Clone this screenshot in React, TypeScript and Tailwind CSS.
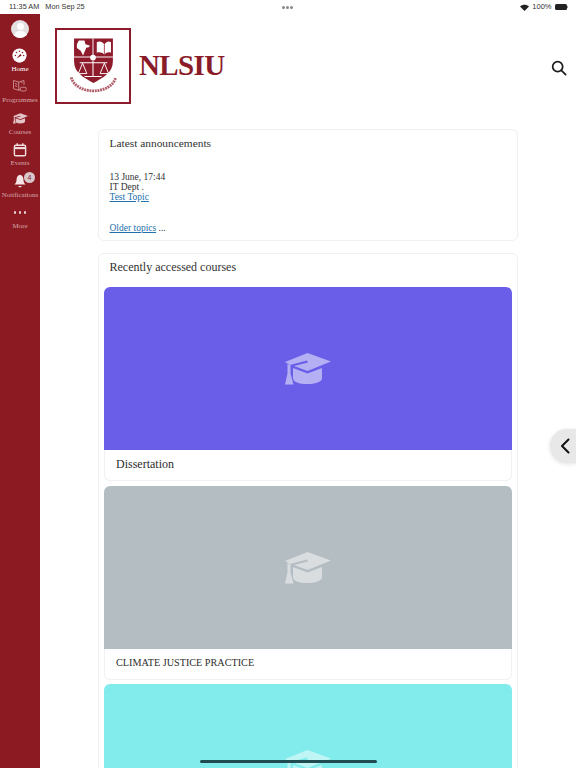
import React from "react";

const serif = "font-['Liberation_Serif','DejaVu_Serif',serif]";

function Cap({ className = "", fill = "#fff" }: { className?: string; fill?: string }) {
  return (
    <svg viewBox="0 0 46 32" className={className} fill={fill}>
      <path d="M22.5 0 L46 8.5 L22.5 18 L9 13 L23 9.5 L22 7.5 L5 12 L0 9 Z" />
      <path d="M8 15 L22.5 20.5 L37 15 V25 C37 29 30 31 22 31 C14 31 8 29 8 25 Z" />
      <path d="M2.5 11 L5.5 12.5 L5.5 20.5 L8.5 31.5 L0 31.5 L2.5 20.5 Z" />
    </svg>
  );
}

function Logo() {
  return (
    <svg viewBox="0 0 76 76" className="w-full h-full">
      <path d="M18 9 H59 V33 C59 45 49 50 38.5 56 C28 50 18 45 18 33 Z" fill="#8e1b2b" />
      <path d="M18 28.5 H59 M38 9 V28.5" stroke="#fff" strokeWidth="1" />
      <path d="M23 11 L29 11 L30 15 L35 16.5 L33 18.5 L31 18.5 L27.5 27 L25 22 L21 19 L21 15 Z" fill="#fff" />
      <path d="M42 13 C45 11 48 13 50 15 C52 13 54 11 57 13 V24 C54 23 52 24 50 26 C48 24 45 23 42 24 Z" fill="#fff" />
      <path d="M50 15 V26" stroke="#8e1b2b" strokeWidth="0.8" />
      <circle cx="38" cy="29" r="3" fill="#fff" />
      <path d="M24 34.5 H53 M38 32 V49 M29 49 H47" stroke="#fff" strokeWidth="1.1" />
      <path d="M27 35 L22.5 46 H31.5 Z M50 35 L45.5 46 H54.5 Z" fill="none" stroke="#fff" strokeWidth="1" />
      <path d="M15 50 C20 69 57 69 62 50" fill="none" stroke="#8e1b2b" strokeOpacity="0.7" strokeWidth="3" strokeDasharray="2 0.8" />
    </svg>
  );
}

function NavItem({ icon, label, active = false }: { icon: React.ReactNode; label: string; active?: boolean }) {
  return (
    <div className="h-[31.5px] flex flex-col items-center justify-start relative">
      <div className="h-[19px] flex items-center justify-center">{icon}</div>
      <div className={`${serif} text-[7px] leading-[9px] whitespace-nowrap ${active ? "text-white" : "text-[#d8a9ad]"}`}>{label}</div>
    </div>
  );
}

function Course({ color, title, iconFill, titleClass = "", className = "" }: { color: string; title: string; iconFill: string; titleClass?: string; className?: string }) {
  return (
    <div className={`overflow-hidden bg-white ${className}`}>
      <div className="h-[163px] rounded-t-[6px] flex items-center justify-center" style={{ backgroundColor: color }}>
        <Cap className="w-[46px] h-[32px]" fill={iconFill} />
      </div>
      <div className={`${serif} h-[31px] rounded-b-[6px] border-x border-b border-[#f1f1f1] px-[11px] pt-[6px] leading-[16px] text-[#2d2d2d] ${titleClass}`}>{title}</div>
    </div>
  );
}

export default function App() {
  return (
    <div className="relative w-[576px] h-[768px] overflow-hidden bg-white font-['Liberation_Sans',sans-serif]">
      <div className="h-[14px] px-[9px] flex items-center justify-between text-[7.3px] text-[#333] relative">
        <div className="flex gap-[6px]"><span>11:35 AM</span><span>Mon Sep 25</span></div>
        <div className="absolute left-[282px] top-[6px] flex gap-[1.5px]">
          <i className="w-[2.5px] h-[2.5px] rounded-full bg-[#888]" />
          <i className="w-[2.5px] h-[2.5px] rounded-full bg-[#888]" />
          <i className="w-[2.5px] h-[2.5px] rounded-full bg-[#888]" />
        </div>
        <div className="flex items-center gap-[3px] mr-[-1px] text-[7.5px]">
          <svg viewBox="0 0 16 12" className="w-[9px] h-[7px]" fill="#222"><path d="M8 12 L0 4 C4 0 12 0 16 4 Z" /></svg>
          <span>100%</span>
          <span className="flex items-center gap-[0.5px]">
            <i className="block w-[12px] h-[6px] rounded-[1.5px] bg-[#222]" />
            <i className="block w-[1px] h-[2px] bg-[#999]" />
          </span>
        </div>
      </div>

      <div className="flex h-[754px]">
        <aside className="w-[40px] shrink-0 bg-[#8b1a22] flex flex-col items-center pt-[6px]">
          <div className="w-[18px] h-[18px] rounded-full bg-[#e4dfe0] overflow-hidden flex flex-col items-center mb-[7.5px]">
            <i className="mt-[3px] w-[7px] h-[8px] rounded-full bg-white" />
            <i className="mt-[1px] w-[15px] h-[8px] rounded-t-full bg-white" />
          </div>
          <NavItem active label="Home" icon={
            <svg viewBox="0 0 20 20" className="w-[15px] h-[15px]">
              <circle cx="10" cy="10" r="9.5" fill="#fff" />
              <path d="M6 14 L11 8 L13 10 Z" fill="#8b1a22" />
              <g fill="#8b1a22"><circle cx="4.5" cy="10" r="1" /><circle cx="6" cy="6" r="1" /><circle cx="10" cy="4.3" r="1" /><circle cx="14" cy="6" r="1" /><circle cx="15.5" cy="10" r="1" /></g>
            </svg>} />
          <NavItem label="Programmes" icon={
            <svg viewBox="0 0 20 20" className="w-[15px] h-[15px]" fill="none" stroke="#d9a9ad" strokeWidth="1">
              <path d="M2 2 L9 4 V15 L2 13 Z M9 4 L16 2 V8 M9 15 L11 14" />
              <rect x="11" y="11" width="8" height="5" rx="2" />
              <path d="M4 6 L7 7 M4 9 L7 10 M12 5 L14 4.5" />
            </svg>} />
          <NavItem label="Courses" icon={<Cap className="w-[15px] h-[11px]" fill="#e3c4c7" />} />
          <NavItem label="Events" icon={
            <svg viewBox="0 0 20 20" className="w-[14px] h-[15px]" fill="none" stroke="#f3dfe0" strokeWidth="2">
              <rect x="2" y="4" width="16" height="15" rx="2" />
              <path d="M2 8 H18" strokeWidth="3" />
              <path d="M6 1 V5 M14 1 V5" />
            </svg>} />
          <NavItem label="Notifications" icon={
            <div className="relative">
              <svg viewBox="0 0 20 20" className="w-[14px] h-[14px] block" fill="#f5e4e5">
                <path d="M10 1 C6 2 5 5 5 9 C5 12 3 14 2 15 H18 C17 14 15 12 15 9 C15 5 14 2 10 1 Z" />
                <path d="M7.5 17 H12.5 C12 19.5 8 19.5 7.5 17 Z" />
              </svg>
              <span className="absolute left-[11px] top-[-2px] w-[11px] h-[11px] rounded-full bg-[#d9c7c9] text-[7px] leading-[11px] text-center text-[#7d2a30]">4</span>
            </div>} />
          <NavItem label="More" icon={
            <div className="flex gap-[2.5px]">
              <i className="w-[2.5px] h-[2.5px] rounded-full bg-[#e9cfd1]" />
              <i className="w-[2.5px] h-[2.5px] rounded-full bg-[#e9cfd1]" />
              <i className="w-[2.5px] h-[2.5px] rounded-full bg-[#e9cfd1]" />
            </div>} />
        </aside>

        <main className="flex-1 min-w-0">
          <header className="h-[115px] pl-[15px] pr-[9px] pt-[14px] flex items-start">
            <div className="w-[76px] h-[76px] border-2 border-[#8e1b2b] bg-white shrink-0">
              <Logo />
            </div>
            <div className={`${serif} ml-[8px] mt-[19px] text-[#8a1c2a] text-[29px] leading-[36px] font-bold tracking-[-0.6px]`}>NLSIU</div>
            <svg viewBox="0 0 24 24" className="ml-auto mt-[32px] w-[16px] h-[16px]" fill="none" stroke="#1d1d1d" strokeWidth="2.6" strokeLinecap="round">
              <circle cx="10" cy="10" r="7.5" />
              <path d="M15.5 15.5 L22 22" />
            </svg>
          </header>

          <div className="ml-[58px] w-[420px] flex flex-col gap-[12px]">
            <section className={`${serif} h-[112px] rounded-[6px] border border-[#f0f0f0] bg-white px-[10.5px] text-[#333]`}>
              <h2 className="pt-[5px] text-[11.4px] leading-[16px]">Latest announcements</h2>
              <div className="mt-[21px] text-[9.5px] leading-[10.2px]">
                <div>13 June, 17:44</div>
                <div>IT Dept .</div>
                <a className="text-[#2270ab] underline">Test Topic</a>
              </div>
              <div className="mt-[20.4px] text-[9.5px] leading-[10px]"><a className="text-[#2270ab] underline">Older topics</a> ...</div>
            </section>

            <section className="rounded-[6px] border border-[#f0f0f0] bg-white px-[5px] pb-[20px]">
              <h2 className={`${serif} px-[5.5px] pt-[5px] pb-[12px] text-[12px] leading-[16px] text-[#333]`}>Recently accessed courses</h2>
              <div className="flex flex-col">
                <Course color="#6a5de8" iconFill="#b5b0f3" title="Dissertation" titleClass="text-[12px]" className="mb-[5px]" />
                <Course color="#b4bdc2" iconFill="#d9dde0" title="CLIMATE JUSTICE PRACTICE" titleClass="text-[10.2px]" className="mb-[4px]" />
                <Course color="#82ecec" iconFill="#c0f5f5" title="" />
              </div>
            </section>
          </div>
        </main>
      </div>

      <div className="absolute right-0 top-[429px] w-[26px] h-[34px] rounded-l-full bg-[#e8e8e8] shadow-[0_1px_4px_rgba(0,0,0,0.12)] flex items-center pl-[9.5px]">
        <svg viewBox="0 0 10 16" className="w-[10px] h-[16px]" fill="none" stroke="#111" strokeWidth="2" strokeLinecap="round" strokeLinejoin="round"><path d="M8.5 1.5 L2 8 L8.5 14.5" /></svg>
      </div>
      <div className="absolute left-[200px] top-[760px] w-[177px] h-[3px] rounded-full bg-[#1f4d52]" />
    </div>
  );
}
